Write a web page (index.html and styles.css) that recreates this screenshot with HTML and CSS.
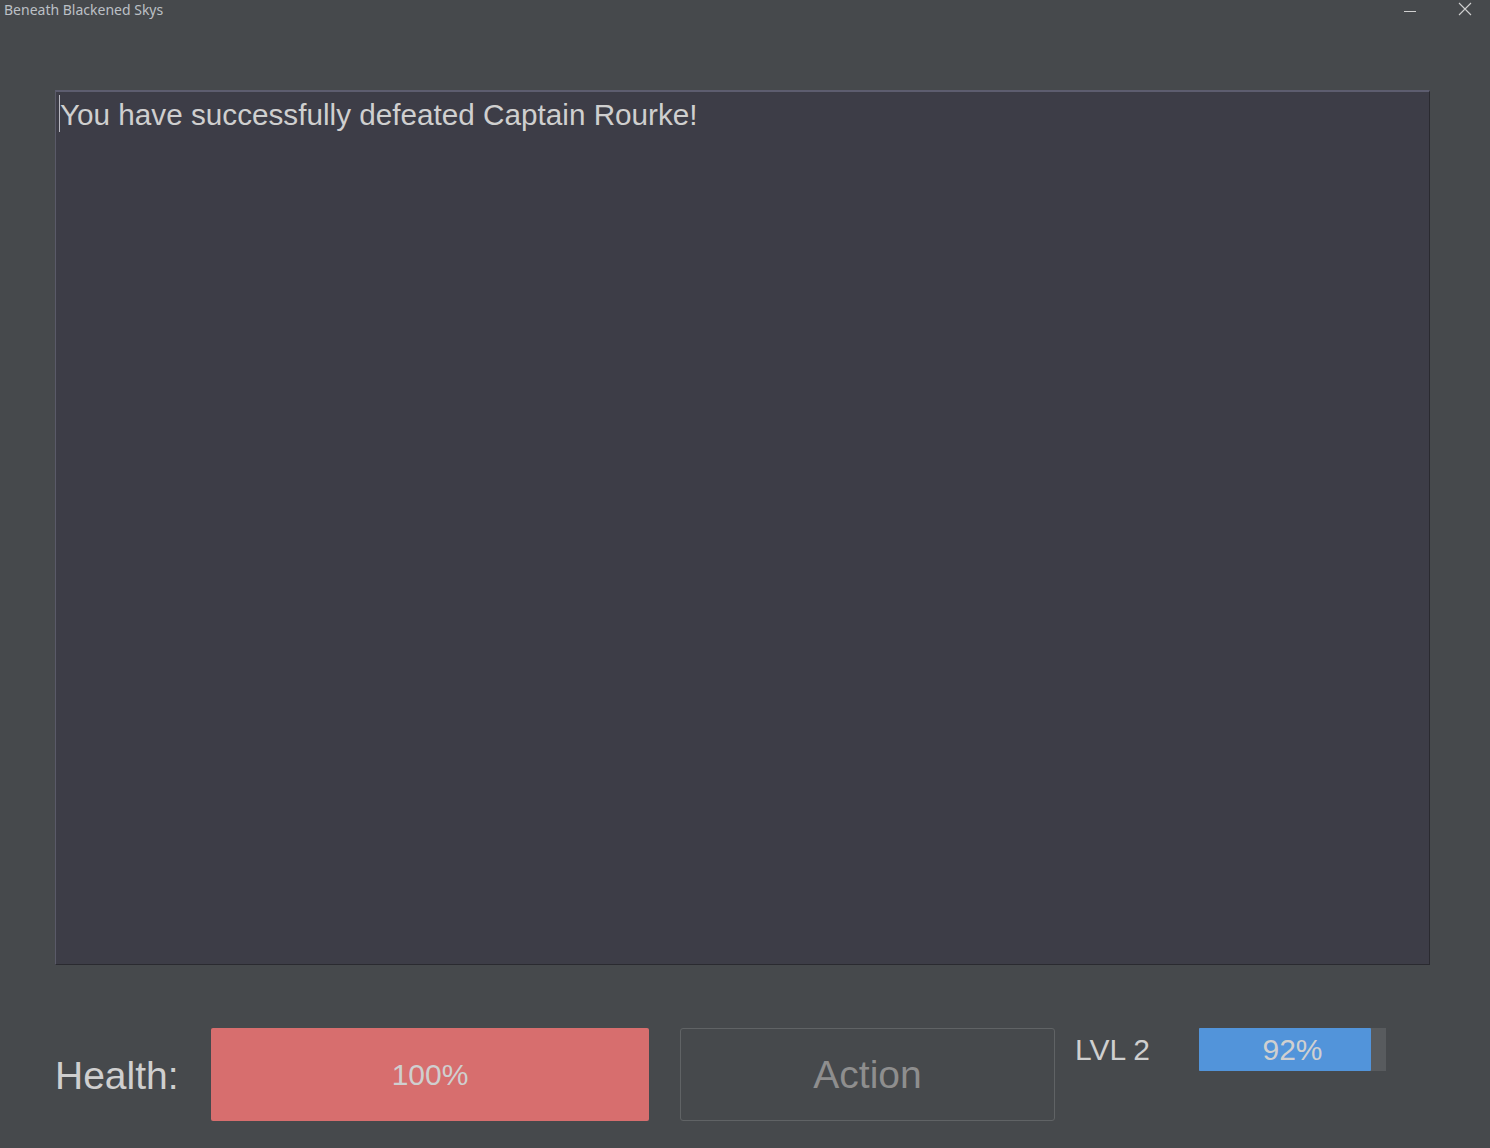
FILE: index.html
```html
<!DOCTYPE html>
<html>
<head>
<meta charset="utf-8">
<title>Beneath Blackened Skys</title>
<link rel="stylesheet" href="styles.css">
</head>
<body>
<div class="window">
  <header class="titlebar">
    <span class="title">Beneath Blackened Skys</span>
    <div class="controls">
      <span class="ctl min"><svg width="14" height="14" viewBox="0 0 14 14"><path d="M1 7.5H13" stroke="#d0d0d0" stroke-width="1"/></svg></span>
      <span class="ctl close"><svg width="14" height="14" viewBox="0 0 14 14"><path d="M1 1L13 13M13 1L1 13" stroke="#d0d0d0" stroke-width="1.1"/></svg></span>
    </div>
  </header>
  <main class="content">
    <div class="log"><span class="caret"></span>You have successfully defeated Captain Rourke!</div>
    <div class="hud">
      <div class="health-label">Health:</div>
      <div class="health-bar">100%</div>
      <button class="action">Action</button>
      <div class="lvl">LVL 2</div>
      <div class="xp-bar"><div class="xp-fill" style="width:92%"></div><span class="xp-text">92%</span></div>
    </div>
  </main>
</div>
</body>
</html>
```

FILE: styles.css
```css
html, body {
  margin: 0;
  padding: 0;
  background: #46494c;
}
body {
  width: 1490px;
  height: 1148px;
  overflow: hidden;
  font-family: "Liberation Sans", Arial, sans-serif;
  color: #cccccc;
}
.window {
  display: flex;
  flex-direction: column;
  height: 1148px;
}
.titlebar {
  height: 20px;
  display: flex;
  align-items: flex-start;
  justify-content: space-between;
}
.title {
  font-family: "Noto Sans", "Open Sans", sans-serif;
  font-size: 14px;
  line-height: 19px;
  color: #bcc0c6;
  padding-left: 4px;
}
.controls {
  display: flex;
  gap: 41px;
  padding: 2px 18px 0 0;
}
.ctl {
  display: block;
  width: 14px;
  height: 14px;
}
.ctl svg { display: block; }
.min { margin-top: 2px; }
.content {
  padding: 70px 60px 0 55px;
  display: flex;
  flex-direction: column;
}
.log {
  position: relative;
  box-sizing: border-box;
  height: 875px;
  background: #3d3d47;
  border-top: 2px solid #5d5d6f;
  border-left: 1px solid #5a5a68;
  border-right: 1px solid #2a2a30;
  border-bottom: 1px solid #2a2a30;
  padding: 6px 4px;
  font-size: 29.7px;
  line-height: 34px;
  color: #cfcfcf;
}
.caret {
  position: absolute;
  left: 3px;
  top: 3px;
  width: 1px;
  height: 37px;
  background: #b8b8c0;
}
.hud {
  margin-top: 63px;
  display: flex;
  align-items: flex-start;
  height: 93px;
}
.health-label {
  width: 156px;
  height: 93px;
  display: flex;
  align-items: center;
  font-size: 39px;
  color: #cfcfcf;
  padding-top: 2px;
  box-sizing: border-box;
}
.health-bar {
  width: 438px;
  height: 93px;
  background: #d76e6e;
  border-radius: 2px;
  display: flex;
  align-items: center;
  justify-content: center;
  font-size: 30px;
  color: #cfcfcf;
}
.action {
  margin-left: 31px;
  width: 375px;
  height: 93px;
  background: transparent;
  border: 1px solid #606365;
  border-radius: 3px;
  font-family: "Liberation Sans", Arial, sans-serif;
  font-size: 39px;
  color: #8e8e8e;
  padding: 0;
}
.lvl {
  margin-left: 20px;
  width: 124px;
  height: 43px;
  line-height: 43px;
  font-size: 30px;
  color: #cfcfcf;
}
.xp-bar {
  position: relative;
  width: 187px;
  height: 43px;
  background: #585b5e;
  display: flex;
  align-items: center;
  justify-content: center;
}
.xp-fill {
  position: absolute;
  left: 0;
  top: 0;
  bottom: 0;
  background: #5294da;
  border-radius: 1px;
}
.xp-text {
  position: relative;
  font-size: 30px;
  color: #d0d0d0;
}
```
